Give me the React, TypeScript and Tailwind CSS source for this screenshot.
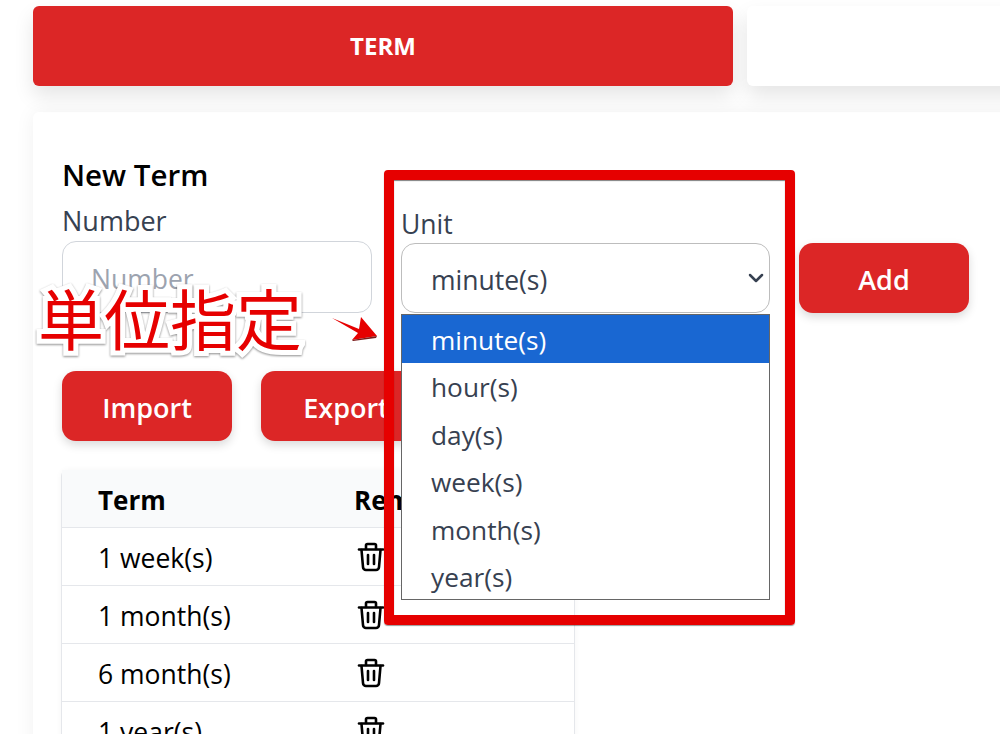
const units = ['minute(s)', 'hour(s)', 'day(s)', 'week(s)', 'month(s)', 'year(s)']
const terms = ['1 week(s)', '1 month(s)', '6 month(s)', '1 year(s)']

function TrashIcon() {
  return (
    <svg width="28" height="30" viewBox="0 0 28 30" fill="none" stroke="#000" strokeWidth="2.6" strokeLinecap="round" strokeLinejoin="round">
      <path d="M2 7.5h24" />
      <path d="M9 7V3.5a1.5 1.5 0 0 1 1.5-1.500h7A1.500 1.500 0 0 1 19 3.500V7" />
      <path d="M4.500 8l1.500 17a3 3 0 0 0 3 3h10a3 3 0 0 0 3-3l1.500-17" />
      <path d="M11 13v9" />
      <path d="M17 13v9" />
    </svg>
  )
}

function RedButton({ label }: { label: string }) {
  return (
    <button className="w-[170px] h-[70px] shrink-0 rounded-[14px] bg-[#dc2626] pt-[5px] text-white text-[27px] font-semibold shadow-[0_4px_10px_rgba(0,0,0,0.15)]">
      {label}
    </button>
  )
}

export default function App() {
  return (
    <div className="relative h-[734px] w-[1000px] overflow-hidden bg-white pl-[33px] pt-[6px] font-['Open_Sans','Noto_Sans_CJK_JP',sans-serif]">
      <div className="flex gap-[14px]">
        <div className="flex h-[80px] w-[700px] shrink-0 items-center justify-center rounded-[6px] bg-[#dc2626] text-[24px] font-bold text-white shadow-[0_10px_20px_rgba(0,0,0,0.1)]">
          TERM
        </div>
        <div className="h-[80px] w-[700px] shrink-0 rounded-[6px] bg-white shadow-[0_10px_20px_rgba(0,0,0,0.1)]" />
      </div>

      <div className="mt-[26px] w-[1100px] rounded-[6px] bg-white pl-[29px] pt-[45px] shadow-[0_0_20px_rgba(0,0,0,0.06)]">
        <h2 className="text-[29.500px] font-semibold leading-[36px] text-black">New Term</h2>
        <div className="mt-[9px] flex items-end">
          <div className="w-[310px]">
            <label className="block text-[27px] leading-[38px] text-[#374151]">Number</label>
            <div className="mt-[1px] flex h-[72px] items-center rounded-[14px] border border-[#d1d5db] pl-[28px] pt-[6px] text-[26.500px] text-[#9ca3af]">
              Number
            </div>
          </div>
          <div className="ml-[29px] w-[369px]">
            <label className="block text-[26.500px] leading-[38px] text-[#374151]">Unit</label>
            <div className="flex h-[70px] items-center justify-between rounded-[14px] border border-[#bdbdbd] pl-[29px] pr-[3px] pt-[5px] text-[26.500px] text-[#374151]">
              minute(s)
              <svg className="-mt-[5px]" width="20" height="20" viewBox="0 0 20 20" fill="none" stroke="#374151" strokeWidth="2.500" strokeLinecap="round" strokeLinejoin="round">
                <path d="M4 7l6 6 6-6" />
              </svg>
            </div>
          </div>
          <div className="ml-[29px]">
            <RedButton label="Add" />
          </div>
        </div>

        <div className="mt-[58px] flex gap-[29px]">
          <RedButton label="Import" />
          <RedButton label="Export" />
        </div>

        <div className="-ml-[1px] mt-[29px] w-[514px] rounded-t-[6px] border-x border-[#e5e7eb] shadow-[0_0_6px_rgba(0,0,0,0.04)]">
          <div className="flex h-[58px] items-center border-b border-[#e5e7eb] bg-[#f9fafb] pt-[4px] text-[26px] font-bold text-black">
            <div className="w-[292px] pl-[36px]">Term</div>
            <div>Remove</div>
          </div>
          {terms.map((t) => (
            <div key={t} className="flex h-[58px] items-center border-b border-[#e5e7eb] pt-[4px] text-[26.500px] text-black">
              <div className="w-[292px] pl-[36px]">{t}</div>
              <div className="-mt-[4px] pl-[3px]">
                <TrashIcon />
              </div>
            </div>
          ))}
        </div>
      </div>

      {/* dropdown list, open over the page */}
      <div className="absolute left-[401px] top-[314px] h-[286px] w-[369px] border border-[#666] bg-white text-[26.250px] text-[#374151]">
        {units.map((u, i) => (
          <div key={u} className={i === 0 ? 'flex h-[47.500px] items-center bg-[#1967d2] pl-[29px] pt-[3px] text-white' : 'flex h-[47.500px] items-center pl-[29px] pt-[3px]'}>
            {u}
          </div>
        ))}
      </div>

      {/* annotation overlays */}
      <div className="absolute left-[38px] top-[276px] font-['Noto_Sans_CJK_JP',sans-serif] text-[66px] font-normal leading-[80px] text-[#e60000] [-webkit-text-stroke:10px_white] [paint-order:stroke_fill] [filter:drop-shadow(0_1px_1px_rgba(0,0,0,0.45))]">
        単位指定
      </div>
      <div className="absolute left-[384px] top-[170px] h-[455px] w-[411px] rounded-[4px] border-[10px] border-[#e60000] shadow-[0_1px_1px_rgba(0,0,0,0.4),inset_0_1px_1px_rgba(0,0,0,0.5)]" />
      <svg className="absolute left-[330px] top-[316px]" width="50" height="28" viewBox="0 0 50 28">
        <path d="M2 2 L29 13 L31 1 L47 20 L22 24 L28 17 Z" fill="#e60000" />
        <path d="M47 20 L22 24 L23 25 L46 22 Z" fill="#7a1a1a" />
      </svg>
    </div>
  )
}
